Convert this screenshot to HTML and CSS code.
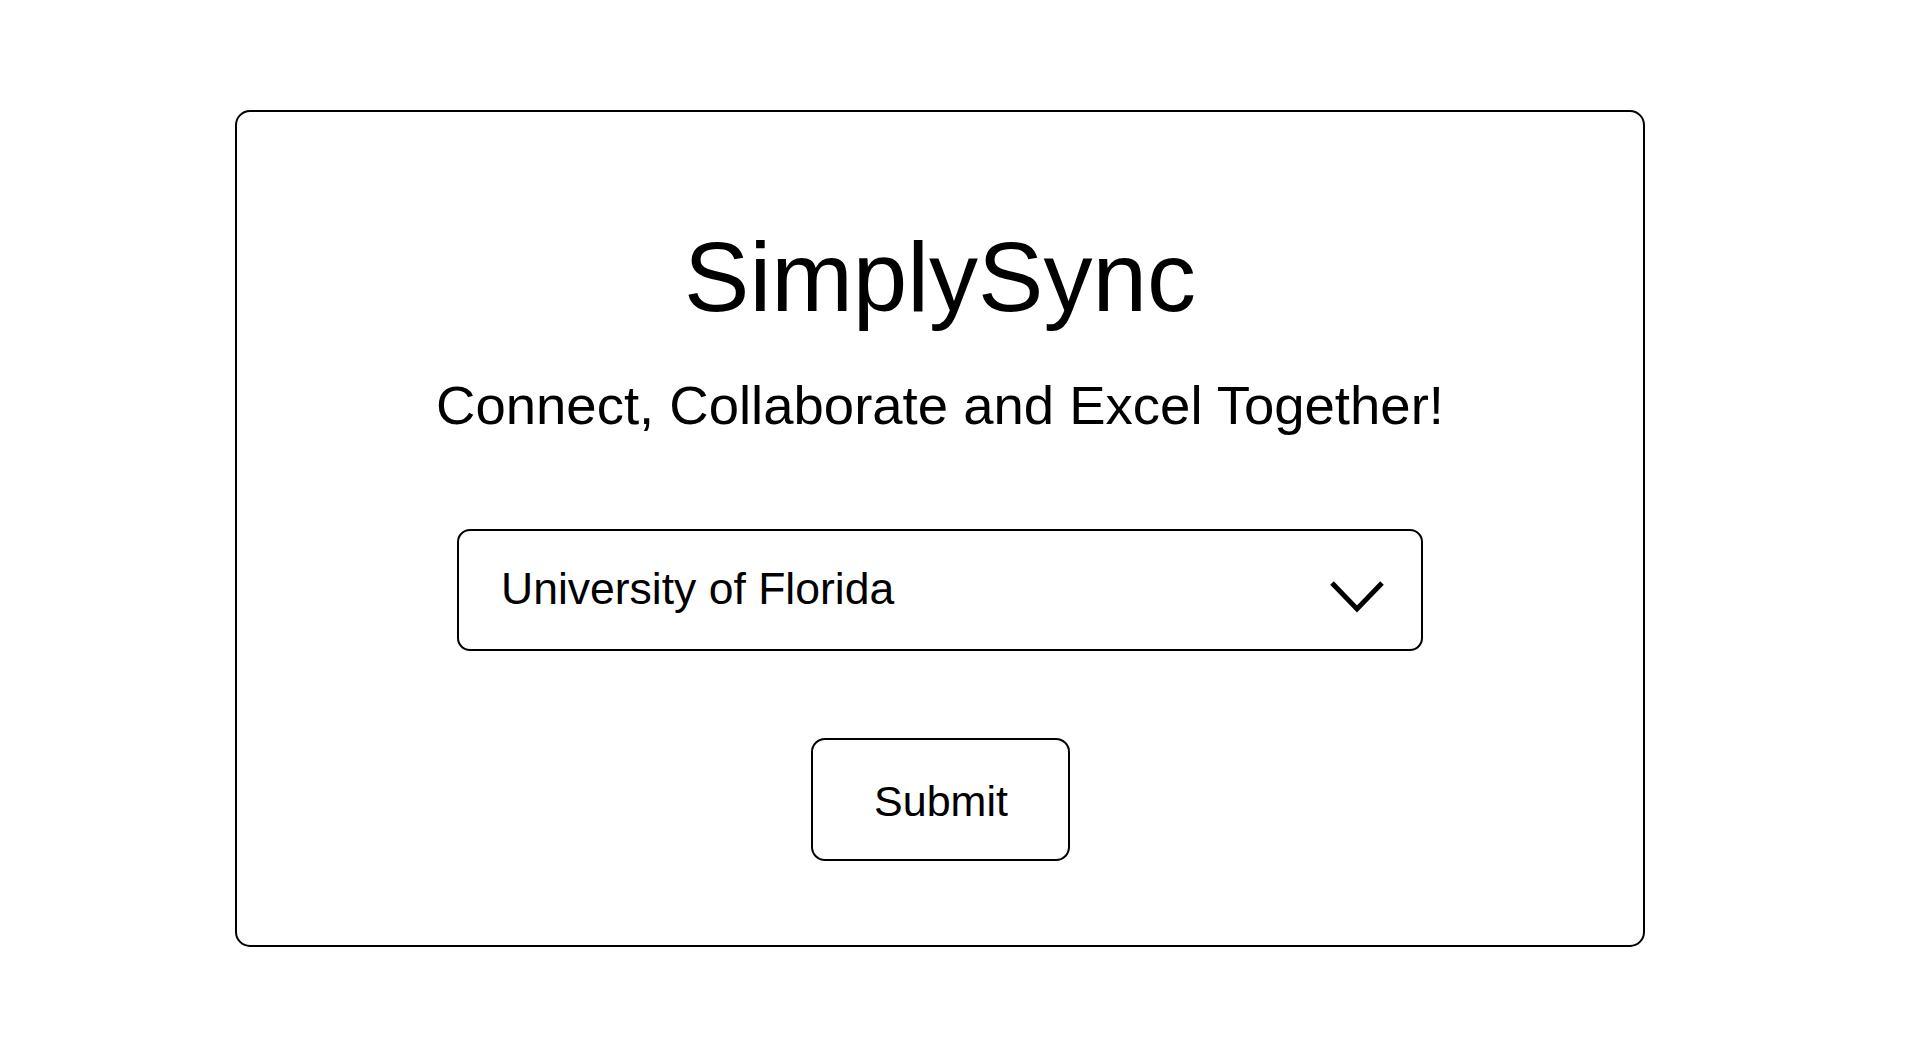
FILE: index.html
```html
<!DOCTYPE html>
<html lang="en">
<head>
<meta charset="utf-8">
<title>SimplySync</title>
<link rel="stylesheet" href="styles.css">
</head>
<body>
  <main class="card">
    <h1 class="title">SimplySync</h1>
    <p class="tagline">Connect, Collaborate and Excel Together!</p>
    <div class="select" role="combobox" aria-expanded="false">
      <span class="select-value">University of Florida</span>
      <svg class="chevron" width="56" height="33" viewBox="0 0 56 33" aria-hidden="true">
        <polyline points="3,3 28,29 53,3" fill="none" stroke="#000" stroke-width="5" stroke-linejoin="miter"/>
      </svg>
    </div>
    <button class="submit" type="button">Submit</button>
  </main>
</body>
</html>
```

FILE: styles.css
```css
* {
  box-sizing: border-box;
}

html, body {
  margin: 0;
  padding: 0;
  background: #ffffff;
}

body {
  font-family: "Liberation Sans", Arial, sans-serif;
  color: #000;
  padding: 110px 0 0 235px;
}

.card {
  width: 1410px;
  height: 837px;
  border: 2px solid #000;
  border-radius: 15px;
  display: flex;
  flex-direction: column;
  align-items: center;
  padding-top: 116px;
}

.title {
  margin: 0;
  font-size: 98px;
  font-weight: 400;
  line-height: 1;
}

.tagline {
  margin: 53px 0 0;
  font-size: 54.5px;
  line-height: 1;
}

.select {
  margin-top: 95px;
  width: 966px;
  height: 122px;
  border: 2px solid #000;
  border-radius: 13px;
  display: flex;
  align-items: center;
  justify-content: space-between;
  padding: 0 36px 0 42px;
}

.select-value {
  font-size: 44.5px;
  line-height: 1;
}

.chevron {
  display: block;
  margin-top: 14px;
}

.submit {
  margin-top: 87px;
  width: 259px;
  height: 123px;
  border: 2px solid #000;
  border-radius: 14px;
  background: #fff;
  color: #000;
  font-family: "Liberation Sans", Arial, sans-serif;
  font-size: 43px;
  line-height: 1;
  padding: 4px 0 0 2px;
}
```
